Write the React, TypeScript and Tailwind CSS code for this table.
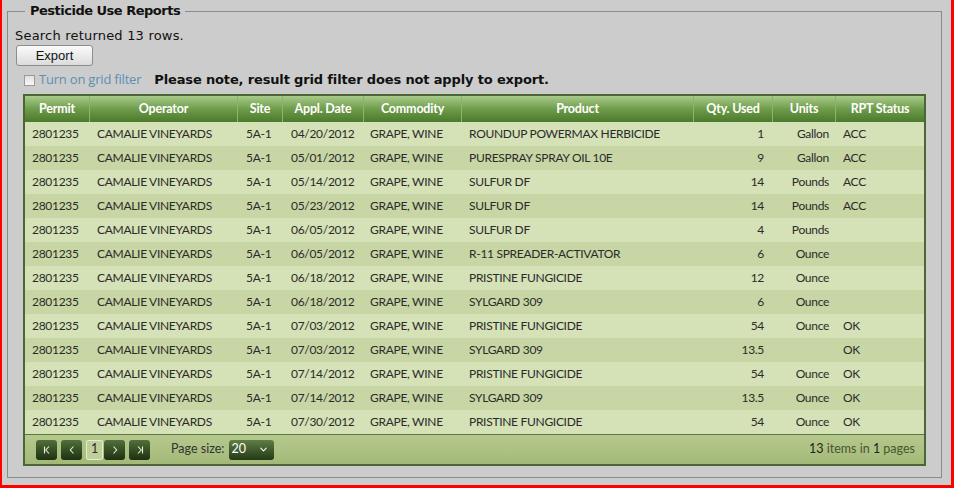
import { ChevronDown } from "lucide-react"

interface Row {
  readonly date: string
  readonly product: string
  readonly qty: string
  readonly units: string
  readonly status: string
}

const rows: Row[] = [
  { date: "04/20/2012", product: "ROUNDUP POWERMAX HERBICIDE", qty: "1", units: "Gallon", status: "ACC" },
  { date: "05/01/2012", product: "PURESPRAY SPRAY OIL 10E", qty: "9", units: "Gallon", status: "ACC" },
  { date: "05/14/2012", product: "SULFUR DF", qty: "14", units: "Pounds", status: "ACC" },
  { date: "05/23/2012", product: "SULFUR DF", qty: "14", units: "Pounds", status: "ACC" },
  { date: "06/05/2012", product: "SULFUR DF", qty: "4", units: "Pounds", status: "" },
  { date: "06/05/2012", product: "R-11 SPREADER-ACTIVATOR", qty: "6", units: "Ounce", status: "" },
  { date: "06/18/2012", product: "PRISTINE FUNGICIDE", qty: "12", units: "Ounce", status: "" },
  { date: "06/18/2012", product: "SYLGARD 309", qty: "6", units: "Ounce", status: "" },
  { date: "07/03/2012", product: "PRISTINE FUNGICIDE", qty: "54", units: "Ounce", status: "OK" },
  { date: "07/03/2012", product: "SYLGARD 309", qty: "13.5", units: "", status: "OK" },
  { date: "07/14/2012", product: "PRISTINE FUNGICIDE", qty: "54", units: "Ounce", status: "OK" },
  { date: "07/14/2012", product: "SYLGARD 309", qty: "13.5", units: "Ounce", status: "OK" },
  { date: "07/30/2012", product: "PRISTINE FUNGICIDE", qty: "54", units: "Ounce", status: "OK" },
]

const columns = [
  { label: "Permit", w: "w-[64px]" },
  { label: "Operator", w: "w-[148px]" },
  { label: "Site", w: "w-[45px]" },
  { label: "Appl. Date", w: "w-[81px]" },
  { label: "Commodity", w: "w-[98px]" },
  { label: "Product", w: "w-[232px]" },
  { label: "Qty. Used", w: "w-[79px]" },
  { label: "Units", w: "w-[63px]" },
  { label: "RPT Status", w: "flex-1" },
]

function PagerButton({ kind }: { readonly kind: "first" | "prev" | "next" | "last" }) {
  return (
    <button className="w-[21px] h-[20px] rounded-[3px] bg-gradient-to-b from-[#51703a] to-[#1e3112] flex items-center justify-center">
      <svg width="10" height="10" viewBox="0 0 10 10" fill="none" stroke="#e8f0d8" strokeWidth="1.1">
        {kind === "first" && <path d="M2.5 1.5v7M7 1.5L3.8 5 7 8.5" />}
        {kind === "prev" && <path d="M6.5 1.5L3.3 5 6.5 8.5" />}
        {kind === "next" && <path d="M3.5 1.5L6.7 5 3.5 8.5" />}
        {kind === "last" && <path d="M7.5 1.5v7M3 1.5L6.2 5 3 8.5" />}
      </svg>
    </button>
  )
}

export default function App() {
  return (
    <div className="w-[954px] h-[488px] bg-[#cccccc] border-l-2 border-r-[3px] border-b-[3px] border-[#ff0000] pl-[5px] pr-[9px] pb-[7px] font-['DejaVu_Sans',sans-serif] text-[#111]">
      <fieldset className="h-full border border-[#8a8a8a] px-[7px] pb-[10px] pt-[6px]">
        <legend className="ml-[10px] px-[5px] text-[13px] font-bold leading-[22px] text-[#111] tracking-[-0.5px]">
          Pesticide Use Reports
        </legend>
        <div className="text-[13px] leading-[16px] tracking-[0.2px]">Search returned 13 rows.</div>
        <button className="block mt-[1px] ml-[1px] w-[77px] h-[21px] rounded-[3px] border border-[#8d8d8d] bg-gradient-to-b from-[#fbfbfb] to-[#dcdcdc] text-[13px] font-['Liberation_Sans',sans-serif] text-[#111]">
          Export
        </button>
        <div className="flex items-center mt-[5px] h-[18px]">
          <span className="ml-[9px] w-[11px] h-[11px] border border-[#9a9a9a] bg-gradient-to-b from-[#e0e0e0] to-[#f8f8f8]" />
          <span className="ml-[4px] text-[13px] text-[#5b8fb5] font-['Open_Sans',sans-serif] tracking-[-0.2px]">
            Turn on grid filter
          </span>
          <span className="ml-[13px] text-[13px] font-bold tracking-[-0.15px]">
            Please note, result grid filter does not apply to export.
          </span>
        </div>
        <div className="mx-[8px] mt-[5px] border-2 border-[#4d6636] font-['Lato',sans-serif] text-[12px]">
          <div className="flex h-[26px] bg-gradient-to-b from-[#a9cb8b] via-[#6f9c4a] to-[#4b7a2c] text-white font-bold text-[12.5px] tracking-[-0.2px]">
            {columns.map((c, i) => (
              <div
                key={c.label}
                className={`${c.w} flex items-center justify-center ${i > 0 ? "border-l border-[#8db26d]" : ""}`}
              >
                {c.label}
              </div>
            ))}
          </div>
          {rows.map((r, i) => (
            <div
              key={i}
              className={`flex h-[24px] items-center text-[#2b2b2b] tracking-[-0.3px] ${i % 2 === 0 ? "bg-[#d5e1b6]" : "bg-[#c7d6a4]"}`}
            >
              <div className="w-[64px] pl-[7px]">2801235</div>
              <div className="w-[148px] pl-[8px]">CAMALIE VINEYARDS</div>
              <div className="w-[45px] pl-[9px]">5A-1</div>
              <div className="w-[81px] pl-[9px]">{r.date}</div>
              <div className="w-[98px] pl-[7px]">GRAPE, WINE</div>
              <div className="w-[232px] pl-[8px]">{r.product}</div>
              <div className="w-[79px] pr-[8px] text-right">{r.qty}</div>
              <div className="w-[63px] pr-[6px] text-right">{r.units}</div>
              <div className="flex-1 pl-[8px]">{r.status}</div>
            </div>
          ))}
          <div className="flex items-center h-[30px] border-t border-[#5d7840] bg-gradient-to-b from-[#b6c98d] to-[#a3b978] pl-[11px] pr-[9px] text-[12.5px]">
            <PagerButton kind="first" />
            <span className="ml-[4px]"><PagerButton kind="prev" /></span>
            <span className="ml-[4px] w-[17px] h-[20px] border border-[#e3ecd0] rounded-[2px] bg-[#bfd09a] flex items-center justify-center text-[#2b2b2b]">
              1
            </span>
            <span className="ml-[1px]"><PagerButton kind="next" /></span>
            <span className="ml-[4px]"><PagerButton kind="last" /></span>
            <span className="ml-[21px] text-[#333]">Page size:</span>
            <span className="ml-[5px] w-[45px] h-[20px] rounded-[3px] bg-gradient-to-b from-[#5f7f45] to-[#243a16] flex items-center justify-between pl-[2px] pr-[5px] text-white">
              20
              <ChevronDown size={11} strokeWidth={2.2} />
            </span>
            <span className="ml-auto text-[#48552f]">
              <span className="text-[#222]">13</span> items in <span className="text-[#222]">1</span> pages
            </span>
          </div>
        </div>
      </fieldset>
    </div>
  )
}
